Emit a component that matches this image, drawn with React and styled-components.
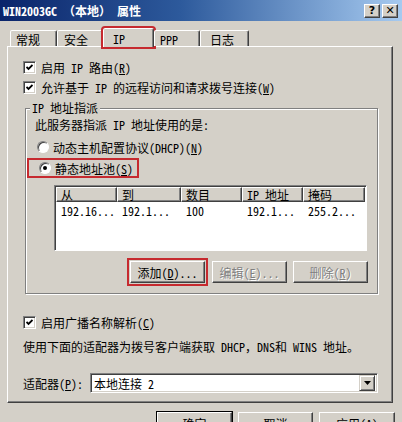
import React from "react";
import styled, { createGlobalStyle } from "styled-components";

const GlobalStyle = createGlobalStyle`
  html, body {
    margin: 0;
    padding: 0;
    background: #d4d0c8;
  }
  body {
    font-family: "Noto Sans Mono CJK SC", "Noto Sans CJK SC", sans-serif;
    font-size: 12px;
    color: #000;
  }
`;

const Window = styled.div`
  width: 402px;
  height: 422px;
  overflow: hidden;
  background: #d4d0c8;
  display: flex;
  flex-direction: column;
`;

const TitleBar = styled.div`
  height: 21px;
  flex: none;
  display: flex;
  align-items: center;
  padding: 0 4px 0 3px;
  background: linear-gradient(to right, #0a246a 0%, #2d5a9c 45%, #a6caf0 100%);
  color: #fff;
  font-weight: bold;
  font-size: 12px;
`;

const Title = styled.div`
  flex: 1;
  white-space: nowrap;
`;

const TitleButton = styled.div`
  width: 16px;
  height: 14px;
  box-sizing: border-box;
  margin-left: 2px;
  background: #d4d0c8;
  border: 1px solid;
  border-color: #fff #404040 #404040 #fff;
  box-shadow: inset -1px -1px #808080;
  display: flex;
  align-items: center;
  justify-content: center;
  color: #000;
  font-family: "DejaVu Sans", sans-serif;
  font-weight: bold;
  font-size: 11px;
  line-height: 1;
`;

const TabStrip = styled.div`
  display: flex;
  align-items: flex-end;
  height: 21px;
  margin: 7px 0 -1px 10px;
  position: relative;
  z-index: 1;
`;

const Tab = styled.div`
  width: ${(p) => p.$w}px;
  height: ${(p) => (p.$active ? 19 : 16)}px;
  margin-bottom: ${(p) => (p.$active ? 0 : 1)}px;
  box-sizing: border-box;
  padding-left: ${(p) => p.$pl}px;
  padding-top: ${(p) => (p.$active ? 0 : 2)}px;
  border: 1px solid;
  border-bottom: none;
  border-color: #fff #404040 transparent #fff;
  box-shadow: inset -1px 0 #808080;
  border-radius: 2px 2px 0 0;
  background: #d4d0c8;
  display: flex;
  align-items: center;
  outline: ${(p) => (p.$active ? "2px solid #c62a2f" : "none")};
  outline-offset: 0;
`;

const Panel = styled.div`
  margin-left: 7px;
  width: 386px;
  height: 357px;
  flex: none;
  box-sizing: border-box;
  border: 1px solid;
  border-color: #fff #404040 #404040 #fff;
  box-shadow: inset -1px -1px #808080;
  padding: 10px 15px 0 15px;
  display: flex;
  flex-direction: column;
  align-items: flex-start;
`;

const CheckRow = styled.div`
  height: 20px;
  margin-top: ${(p) => p.$mt || 0}px;
  display: flex;
  align-items: center;
  gap: 5px;
  white-space: nowrap;
`;

const CheckBox = styled.span`
  width: 13px;
  height: 13px;
  box-sizing: border-box;
  background: #fff;
  border: 1px solid;
  border-color: #808080 #fff #fff #808080;
  box-shadow: inset 1px 1px #404040, inset -1px -1px #d4d0c8;
  display: flex;
  align-items: center;
  justify-content: center;
  flex: none;
`;

const Check = () => (
  <CheckBox>
    <svg width="7" height="7" viewBox="0 0 7 7">
      <polyline points="0.5,3 2.5,5 6.5,1" fill="none" stroke="#000" strokeWidth="1.8" />
    </svg>
  </CheckBox>
);

const GroupBox = styled.div`
  margin: 11px 0 0 2px;
  width: 353px;
  box-sizing: border-box;
  border: 1px solid #808080;
  box-shadow: inset 1px 1px #fff, 1px 1px #fff;
  padding: 0 9px 7px 9px;
  display: flex;
  flex-direction: column;
  align-items: flex-start;
`;

const Legend = styled.div`
  margin: -8px 0 0 -5px;
  padding: 0 2px;
  line-height: 14px;
  background: #d4d0c8;
`;

const Line = styled.div`
  line-height: 14px;
  margin-top: ${(p) => p.$mt || 0}px;
  white-space: nowrap;
`;

const RadioRow = styled.div`
  height: 16px;
  margin: ${(p) => p.$mt || 0}px 0 0 2px;
  display: flex;
  align-items: center;
  gap: 4px;
  white-space: nowrap;
`;

const Radio = styled.span`
  width: 12px;
  height: 12px;
  box-sizing: border-box;
  border-radius: 50%;
  background: #fff;
  border: 1px solid;
  border-color: #808080 #fff #fff #808080;
  box-shadow: inset 1px 1px #404040;
  display: flex;
  align-items: center;
  justify-content: center;
  flex: none;

  &::after {
    content: "";
    width: 4px;
    height: 4px;
    border-radius: 50%;
    background: ${(p) => (p.$on ? "#000" : "transparent")};
  }
`;

const Highlight = styled.div`
  margin: ${(p) => p.$m};
  border: 2px solid #c62a2f;
  padding: ${(p) => p.$p};
  display: flex;
  align-items: center;
`;

const ListView = styled.div`
  margin: 7px 0 0 19px;
  width: 313px;
  height: 66px;
  flex: none;
  box-sizing: border-box;
  background: #fff;
  border: 1px solid;
  border-color: #808080 #fff #fff #808080;
  box-shadow: inset 1px 1px #404040;
  padding: 1px 0 0 1px;
  overflow: hidden;
`;

const Columns = styled.div`
  display: grid;
  grid-template-columns: 61px 64px 61px 61px 62px;
`;

const HeadCell = styled.div`
  height: 15px;
  box-sizing: border-box;
  background: #d4d0c8;
  border: 1px solid;
  border-color: #fff #404040 #404040 #fff;
  box-shadow: inset -1px -1px #808080;
  padding-left: 4px;
  line-height: 13px;
  white-space: nowrap;
`;

const Cell = styled.div`
  padding: 2px 0 0 5px;
  line-height: 14px;
  white-space: nowrap;
`;

const ButtonRow = styled.div`
  margin: 7px 0 0 92px;
  display: flex;
  align-items: center;
`;

const Button = styled.button`
  width: ${(p) => p.$w || 75}px;
  height: ${(p) => p.$h || 22}px;
  margin-left: ${(p) => p.$ml || 0}px;
  flex: none;
  box-sizing: border-box;
  padding: 0;
  font: inherit;
  background: #d4d0c8;
  border: 1px solid;
  border-color: #fff #404040 #404040 #fff;
  box-shadow: ${(p) =>
    p.$default ? "inset -1px -1px #808080, 0 0 0 1px #000" : "inset -1px -1px #808080"};
  color: ${(p) => (p.disabled ? "#808080" : "#000")};
  text-shadow: ${(p) => (p.disabled ? "1px 1px #fff" : "none")};
  white-space: nowrap;
`;

const AdapterRow = styled.div`
  margin-top: 19px;
  display: flex;
  align-items: center;
  gap: 7px;
  white-space: nowrap;
`;

const Combo = styled.div`
  width: 288px;
  height: 20px;
  box-sizing: border-box;
  background: #fff;
  border: 1px solid;
  border-color: #808080 #fff #fff #808080;
  box-shadow: inset 1px 1px #404040, inset -1px -1px #d4d0c8;
  display: flex;
  align-items: center;
  padding: 2px 2px 2px 3px;
`;

const ComboText = styled.span`
  flex: 1;
`;

const DropButton = styled.div`
  width: 16px;
  height: 16px;
  box-sizing: border-box;
  background: #d4d0c8;
  border: 1px solid;
  border-color: #d4d0c8 #404040 #404040 #d4d0c8;
  box-shadow: inset 1px 1px #fff, inset -1px -1px #808080;
  display: flex;
  align-items: center;
  justify-content: center;
`;

const Footer = styled.div`
  margin-top: 9px;
  display: flex;
  justify-content: flex-end;
  gap: 6px;
  padding-right: 7px;
`;

const Key = ({ k }) => (
  <>
    (<u>{k}</u>)
  </>
);

const tabs = [
  { label: "常规", w: 47, pl: 5 },
  { label: "安全", w: 46, pl: 6 },
  { label: "IP", w: 51, pl: 9, active: true },
  { label: "PPP", w: 46, pl: 5 },
  { label: "日志", w: 49, pl: 9 },
];

const heads = ["从", "到", "数目", "IP 地址", "掩码"];
const row = ["192.16...", "192.1...", "100", "192.1...", "255.2..."];

export default function App() {
  return (
    <Window>
      <GlobalStyle />
      <TitleBar>
        <Title>WIN2003GC （本地） 属性</Title>
        <TitleButton>?</TitleButton>
        <TitleButton>✕</TitleButton>
      </TitleBar>

      <TabStrip>
        {tabs.map((t) => (
          <Tab key={t.label} $w={t.w} $pl={t.pl} $active={t.active}>
            {t.label}
          </Tab>
        ))}
      </TabStrip>

      <Panel>
        <CheckRow>
          <Check />
          <span>
            启用 IP 路由<Key k="R" />
          </span>
        </CheckRow>
        <CheckRow>
          <Check />
          <span>
            允许基于 IP 的远程访问和请求拨号连接<Key k="W" />
          </span>
        </CheckRow>

        <GroupBox>
          <Legend>IP 地址指派</Legend>
          <Line $mt={3}>此服务器指派 IP 地址使用的是:</Line>
          <RadioRow $mt={7}>
            <Radio />
            <span>
              动态主机配置协议(DHCP)<Key k="N" />
            </span>
          </RadioRow>
          <Highlight $m="3px 0 0 -8px" $p="0 4px 0 8px">
            <RadioRow>
              <Radio $on />
              <span>
                静态地址池<Key k="S" />
              </span>
            </RadioRow>
          </Highlight>

          <ListView>
            <Columns>
              {heads.map((h) => (
                <HeadCell key={h}>{h}</HeadCell>
              ))}
              {row.map((c, i) => (
                <Cell key={i}>{c}</Cell>
              ))}
            </Columns>
          </ListView>

          <ButtonRow>
            <Highlight $m="0" $p="1px">
              <Button>
                添加<Key k="D" />...
              </Button>
            </Highlight>
            <Button disabled $ml={4}>
              编辑<Key k="E" />...
            </Button>
            <Button disabled $ml={6}>
              删除<Key k="R" />
            </Button>
          </ButtonRow>
        </GroupBox>

        <CheckRow $mt={18}>
          <Check />
          <span>
            启用广播名称解析<Key k="C" />
          </span>
        </CheckRow>
        <Line $mt={8}>使用下面的适配器为拨号客户端获取 DHCP，DNS和 WINS 地址。</Line>

        <AdapterRow>
          <span>
            适配器<Key k="P" />:
          </span>
          <Combo>
            <ComboText>本地连接 2</ComboText>
            <DropButton>
              <svg width="7" height="4" viewBox="0 0 7 4">
                <polygon points="0,0 7,0 3.5,4" fill="#000" />
              </svg>
            </DropButton>
          </Combo>
        </AdapterRow>
      </Panel>

      <Footer>
        <Button $default $h={23}>确定</Button>
        <Button $h={23}>取消</Button>
        <Button $h={23} $w={76}>
          应用<Key k="A" />
        </Button>
      </Footer>
    </Window>
  );
}
